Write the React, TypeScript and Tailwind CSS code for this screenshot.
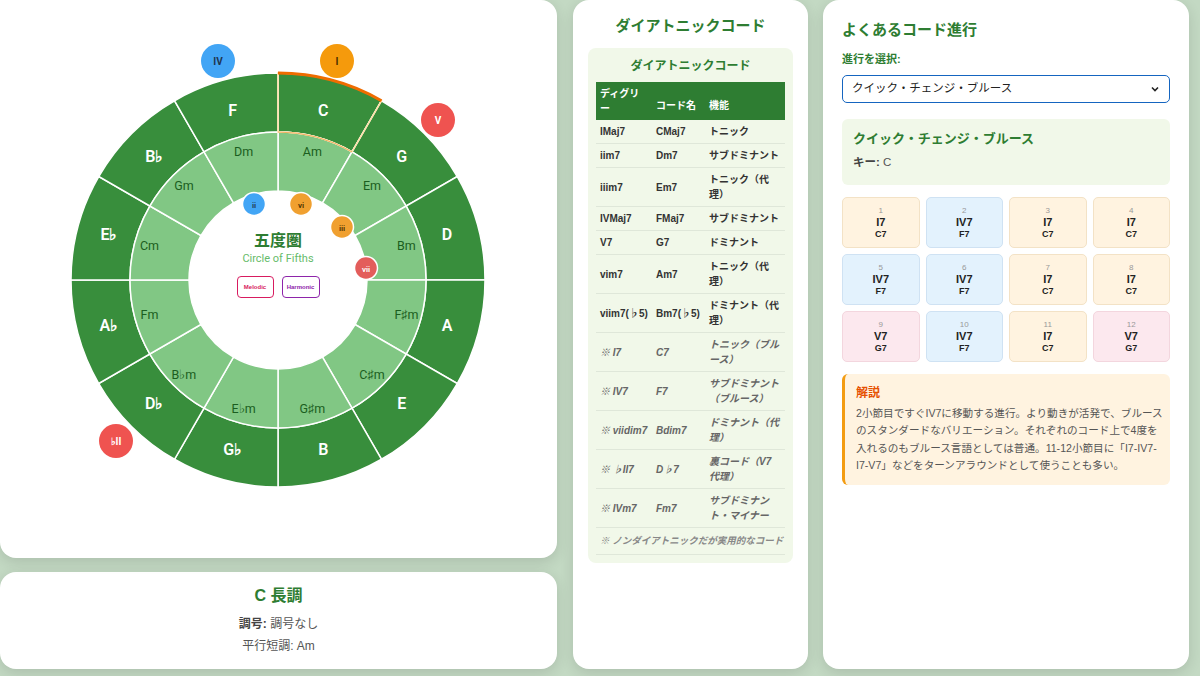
import React from 'react'

const CX = 278
const CY = 280
const R_IN = 89
const R_MID = 148
const R_OUT = 207

const majors = ['C', 'G', 'D', 'A', 'E', 'B', 'G♭', 'D♭', 'A♭', 'E♭', 'B♭', 'F']
const minors = ['Am', 'Em', 'Bm', 'F♯m', 'C♯m', 'G♯m', 'E♭m', 'B♭m', 'Fm', 'Cm', 'Gm', 'Dm']

function pt(r: number, deg: number) {
  const a = (deg * Math.PI) / 180
  return [CX + r * Math.sin(a), CY - r * Math.cos(a)]
}

function sector(r1: number, r2: number, a0: number, a1: number) {
  const [x0, y0] = pt(r2, a0)
  const [x1, y1] = pt(r2, a1)
  const [x2, y2] = pt(r1, a1)
  const [x3, y3] = pt(r1, a0)
  return `M${x0} ${y0} A${r2} ${r2} 0 0 1 ${x1} ${y1} L${x2} ${y2} A${r1} ${r1} 0 0 0 ${x3} ${y3} Z`
}

function arcPath(r: number, a0: number, a1: number) {
  const [x0, y0] = pt(r, a0)
  const [x1, y1] = pt(r, a1)
  return `M${x0} ${y0} A${r} ${r} 0 0 1 ${x1} ${y1}`
}

const outerBadges = [
  { label: 'IV', x: 218, y: 61, fill: '#42a5f5', color: '#1f3550' },
  { label: 'I', x: 337, y: 61, fill: '#f59a0c', color: '#4a3000' },
  { label: 'V', x: 438, y: 120, fill: '#ef5350', color: '#ffffff' },
  { label: '♭II', x: 116, y: 441, fill: '#ef5350', color: '#ffffff' },
]

const innerBadges = [
  { label: 'ii', x: 254, y: 204, fill: '#42a5f5', color: '#1f3550' },
  { label: 'vi', x: 301, y: 204, fill: '#f0a030', color: '#4a3000' },
  { label: 'iii', x: 342, y: 227, fill: '#f0a030', color: '#4a3000' },
  { label: 'vii', x: 366, y: 268, fill: '#e35d5b', color: '#ffffff' },
]

function CircleOfFifths() {
  return (
    <svg width={557} height={558} viewBox="0 0 557 558" className="block">
      {majors.map((m, i) => (
        <path key={'o' + m} d={sector(R_MID, R_OUT, i * 30, i * 30 + 30)} fill="#388e3c" stroke="#ffffff" strokeWidth={1.5} />
      ))}
      {minors.map((m, i) => (
        <path key={'i' + m} d={sector(R_IN, R_MID, i * 30, i * 30 + 30)} fill="#81c784" stroke="#ffffff" strokeWidth={1.5} />
      ))}
      <path d={sector(R_MID, R_OUT, 0, 30)} fill="none" stroke="#ffe0a8" strokeWidth={1.5} />
      <path d={arcPath(R_OUT, 0, 30)} fill="none" stroke="#ef6c00" strokeWidth={3} />
      <path d={arcPath(R_MID, 0, 30)} fill="none" stroke="#f0b060" strokeWidth={1} />
      {majors.map((m, i) => {
        const [x, y] = pt(175, i * 30 + 15)
        return (
          <text key={'t' + m} x={x} y={y} textAnchor="middle" dominantBaseline="central" fill="#ffffff" fontSize={16} fontWeight={600} fontFamily="Roboto, 'Liberation Sans', sans-serif">
            {m}
          </text>
        )
      })}
      {minors.map((m, i) => {
        const [x, y] = pt(133, i * 30 + 15)
        return (
          <text key={'u' + m} x={x} y={y} textAnchor="middle" dominantBaseline="central" fill="#1b5e20" fontSize={12.5} fontFamily="Roboto, 'Liberation Sans', sans-serif">
            {m}
          </text>
        )
      })}
      {outerBadges.map((b) => (
        <g key={b.label}>
          <circle cx={b.x} cy={b.y} r={17} fill={b.fill} />
          <text x={b.x} y={b.y} textAnchor="middle" dominantBaseline="central" fill={b.color} fontSize={10} fontWeight={700} fontFamily="Roboto, 'Liberation Sans', sans-serif">
            {b.label}
          </text>
        </g>
      ))}
      {innerBadges.map((b) => (
        <g key={b.label}>
          <circle cx={b.x} cy={b.y} r={11.5} fill={b.fill} stroke="#ffffff" strokeWidth={1.5} />
          <text x={b.x} y={b.y + 1} textAnchor="middle" dominantBaseline="central" fill={b.color} fontSize={8} fontWeight={600} fontFamily="Roboto, 'Liberation Sans', sans-serif">
            {b.label}
          </text>
        </g>
      ))}
    </svg>
  )
}

interface Row {
  degree: string
  chord: string
  func: string
  extra?: boolean
}

const rows: Row[] = [
  { degree: 'IMaj7', chord: 'CMaj7', func: 'トニック' },
  { degree: 'iim7', chord: 'Dm7', func: 'サブドミナント' },
  { degree: 'iiim7', chord: 'Em7', func: 'トニック（代理）' },
  { degree: 'IVMaj7', chord: 'FMaj7', func: 'サブドミナント' },
  { degree: 'V7', chord: 'G7', func: 'ドミナント' },
  { degree: 'vim7', chord: 'Am7', func: 'トニック（代理）' },
  { degree: 'viim7(♭5)', chord: 'Bm7(♭5)', func: 'ドミナント（代理）' },
  { degree: '※ I7', chord: 'C7', func: 'トニック（ブルース）', extra: true },
  { degree: '※ IV7', chord: 'F7', func: 'サブドミナント（ブルース）', extra: true },
  { degree: '※ viidim7', chord: 'Bdim7', func: 'ドミナント（代理）', extra: true },
  { degree: '※ ♭II7', chord: 'D♭7', func: '裏コード（V7代理）', extra: true },
  { degree: '※ IVm7', chord: 'Fm7', func: 'サブドミナント・マイナー', extra: true },
]

const bars = [
  { n: 1, r: 'I7', c: 'C7' },
  { n: 2, r: 'IV7', c: 'F7' },
  { n: 3, r: 'I7', c: 'C7' },
  { n: 4, r: 'I7', c: 'C7' },
  { n: 5, r: 'IV7', c: 'F7' },
  { n: 6, r: 'IV7', c: 'F7' },
  { n: 7, r: 'I7', c: 'C7' },
  { n: 8, r: 'I7', c: 'C7' },
  { n: 9, r: 'V7', c: 'G7' },
  { n: 10, r: 'IV7', c: 'F7' },
  { n: 11, r: 'I7', c: 'C7' },
  { n: 12, r: 'V7', c: 'G7' },
]

function barClass(r: string) {
  if (r === 'IV7') return 'bg-[#e3f2fd] border-[#cfe2f3]'
  if (r === 'V7') return 'bg-[#fce8ee] border-[#f3d6de]'
  return 'bg-[#fff3e0] border-[#f3e2c6]'
}

export default function App() {
  return (
    <div
      className="w-[1200px] h-[676px] overflow-hidden bg-[#c3d9c3] flex text-[#333]"
      style={{ fontFamily: "'Liberation Sans', 'Noto Sans CJK JP', sans-serif" }}
    >
      <div className="w-[557px] flex flex-col gap-[14px] shrink-0">
        <div className="relative h-[558px] bg-white rounded-b-[16px] rounded-tr-[16px] shadow-[0_4px_14px_rgba(0,0,0,0.12)]">
          <CircleOfFifths />
          <div className="absolute left-[188px] top-[229px] w-[180px] flex flex-col items-center">
            <div className="text-[16px] leading-[24px] font-bold text-[#2e7d32]">五度圏</div>
            <div className="text-[11px] leading-[12px] text-[#66bb6a]" style={{ fontFamily: 'Roboto, sans-serif' }}>Circle of Fifths</div>
            <div className="flex gap-[8px] mt-[11px]">
              <div className="w-[37px] h-[22px] border-[1.5px] border-[#d81b60] rounded-[4px] flex items-center justify-center text-[6px] font-bold text-[#d81b60]">Melodic</div>
              <div className="w-[38px] h-[22px] border-[1.5px] border-[#8e24aa] rounded-[4px] flex items-center justify-center text-[6px] font-bold text-[#8e24aa]">Harmonic</div>
            </div>
          </div>
        </div>
        <div className="h-[97px] bg-white rounded-[16px] shadow-[0_4px_14px_rgba(0,0,0,0.12)] flex flex-col items-center pt-[12px]">
          <div className="text-[16px] leading-[24px] font-bold text-[#2e7d32]">C 長調</div>
          <div className="text-[12px] leading-[22px] mt-[5px] text-[#555]"><span className="font-bold text-[#444]">調号:</span> 調号なし</div>
          <div className="text-[12px] leading-[22px] text-[#555]">平行短調: Am</div>
        </div>
      </div>

      <div className="ml-[16px] w-[235px] h-[669px] shrink-0 bg-white rounded-[16px] shadow-[0_4px_14px_rgba(0,0,0,0.12)] px-[15px] pt-[14px]">
        <div className="text-center text-[15px] leading-[24px] font-bold text-[#2e7d32]">ダイアトニックコード</div>
        <div className="mt-[10px] bg-[#f1f8e9] rounded-[8px] px-[8px] pt-[8px] pb-[8px]">
          <div className="text-center text-[12px] leading-[20px] font-bold text-[#2e7d32]">ダイアトニックコード</div>
          <table className="w-full table-fixed mt-[6px] border-collapse text-[10px] leading-[15px]">
            <colgroup>
              <col className="w-[56px]" />
              <col className="w-[53px]" />
              <col />
            </colgroup>
            <thead>
              <tr className="bg-[#2e7d32] text-white">
                <th className="text-left font-bold px-[4px] pt-[4px] pb-[4px]">ディグリー</th>
                <th className="text-left font-bold px-[4px] pt-[12px] pb-[4px]">コード名</th>
                <th className="text-left font-bold px-[4px] pt-[12px] pb-[4px]">機能</th>
              </tr>
            </thead>
            <tbody>
              {rows.map((r) => (
                <tr key={r.degree} className={`border-b border-[#dfe7d9] ${r.extra ? 'italic text-[#666]' : 'text-[#333]'}`}>
                  <td className="px-[4px] py-[4px] font-bold whitespace-nowrap">{r.degree}</td>
                  <td className="px-[4px] py-[4px] font-bold whitespace-nowrap">{r.chord}</td>
                  <td className="px-[4px] py-[4px] font-bold">{r.func}</td>
                </tr>
              ))}
              <tr className="border-b border-[#dfe7d9]">
                <td colSpan={3} className="px-[4px] py-[6px] text-[9.5px] leading-[14px] italic font-bold text-[#888] whitespace-nowrap">※ ノンダイアトニックだが実用的なコード</td>
              </tr>
            </tbody>
          </table>
        </div>
      </div>

      <div className="ml-[15px] w-[366px] h-[669px] shrink-0 bg-white rounded-[16px] shadow-[0_4px_14px_rgba(0,0,0,0.12)] px-[19px] pt-[18px]">
        <div className="text-[15px] leading-[24px] font-bold text-[#2e7d32]">よくあるコード進行</div>
        <div className="mt-[9px] text-[11px] leading-[16px] font-bold text-[#2e7d32]">進行を選択:</div>
        <div className="mt-[8px] h-[28px] border-[1.5px] border-[#1565c0] rounded-[5px] flex items-center justify-between px-[9px] text-[11.5px] text-[#222]">
          <span>クイック・チェンジ・ブルース</span>
          <svg width="10" height="10" viewBox="0 0 10 10"><path d="M2 3.5 L5 6.5 L8 3.5" fill="none" stroke="#222" strokeWidth="1.6" /></svg>
        </div>
        <div className="mt-[16px] h-[66px] bg-[#f1f8e9] rounded-[6px] px-[11px] pt-[9px]">
          <div className="text-[13px] leading-[22px] font-bold text-[#2e7d32]">クイック・チェンジ・ブルース</div>
          <div className="mt-[3px] text-[11.5px] leading-[18px] text-[#555]"><span className="font-bold text-[#444]">キー:</span> C</div>
        </div>
        <div className="mt-[12px] grid grid-cols-4 gap-[6px]">
          {bars.map((b) => (
            <div key={b.n} className={`h-[51px] border rounded-[5px] flex flex-col items-center justify-center ${barClass(b.r)}`}>
              <div className="text-[8px] leading-[10px] text-[#999]">{b.n}</div>
              <div className="text-[11px] leading-[13px] font-bold text-[#222]">{b.r}</div>
              <div className="text-[9px] leading-[11px] font-bold text-[#222]">{b.c}</div>
            </div>
          ))}
        </div>
        <div className="mt-[12px] bg-[#fff3e0] border-l-[3px] border-[#f39c12] rounded-[6px] pl-[11px] pr-[4px] pt-[10px] pb-[10px]">
          <div className="text-[12px] leading-[18px] font-bold text-[#e65100]">解説</div>
          <div className="mt-[3px] text-[10.6px] leading-[17.4px] text-[#555]">
            2小節目ですぐIV7に移動する進行。より動きが活発で、ブルースのスタンダードなバリエーション。それぞれのコード上で4度を入れるのもブルース言語としては普通。11-12小節目に「I7-IV7-I7-V7」などをターンアラウンドとして使うことも多い。
          </div>
        </div>
      </div>
    </div>
  )
}
